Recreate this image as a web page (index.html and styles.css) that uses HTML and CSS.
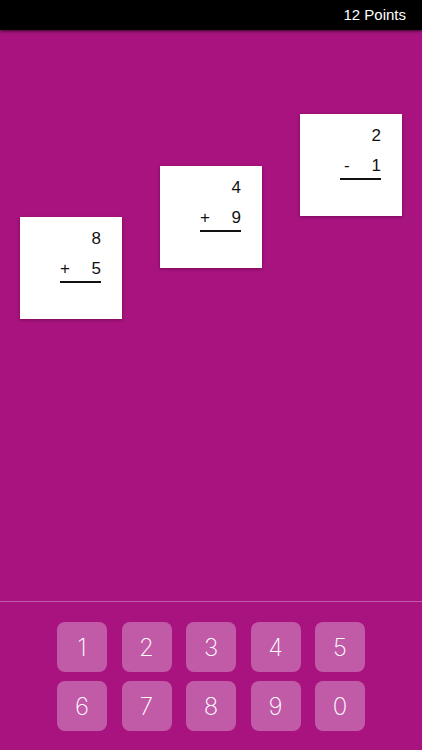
FILE: index.html
```html
<!DOCTYPE html>
<html lang="en">
<head>
<meta charset="utf-8">
<title>Math Drop</title>
<link rel="stylesheet" href="styles.css">
</head>
<body>
<div class="app">
  <header class="topbar"><span class="points">12 Points</span></header>
  <main class="board">
    <div class="card" style="left:20px;top:187px">
      <div class="problem">
        <div class="row top">8</div>
        <div class="row bottom"><span>+</span><span>5</span></div>
      </div>
    </div>
    <div class="card" style="left:160px;top:136px">
      <div class="problem">
        <div class="row top">4</div>
        <div class="row bottom"><span>+</span><span>9</span></div>
      </div>
    </div>
    <div class="card" style="left:300px;top:84px">
      <div class="problem">
        <div class="row top">2</div>
        <div class="row bottom"><span class="minus">-</span><span>1</span></div>
      </div>
    </div>
  </main>
  <footer class="keypad">
    <div class="keys">
      <button class="key">1</button>
      <button class="key">2</button>
      <button class="key">3</button>
      <button class="key">4</button>
      <button class="key">5</button>
      <button class="key">6</button>
      <button class="key">7</button>
      <button class="key">8</button>
      <button class="key">9</button>
      <button class="key">0</button>
    </div>
  </footer>
</div>
</body>
</html>
```
FILE: styles.css
```css
html, body {
  margin: 0;
  padding: 0;
}
body {
  width: 422px;
  height: 750px;
  overflow: hidden;
  background: #a8137f;
  font-family: "Liberation Sans", Arial, sans-serif;
}
.app {
  display: flex;
  flex-direction: column;
  height: 750px;
}
.topbar {
  height: 30px;
  background: #000;
  display: flex;
  justify-content: flex-end;
  align-items: center;
  padding-right: 16px;
  box-shadow: 0 1px 3px rgba(0, 0, 0, 0.7);
  position: relative;
  z-index: 2;
}
.points {
  color: #fff;
  font-size: 15px;
  line-height: 30px;
}
.board {
  height: 571px;
  position: relative;
  background: #a8137f;
}
.card {
  position: absolute;
  width: 102px;
  height: 102px;
  background: #fff;
  box-shadow: 0 1px 3px rgba(60, 0, 40, 0.45);
  box-sizing: border-box;
  padding: 9px 21px 0 0;
  display: flex;
  justify-content: flex-end;
  align-items: flex-start;
}
.problem {
  width: 41px;
  display: flex;
  flex-direction: column;
  gap: 5px;
  color: #111;
  font-size: 17px;
}
.row {
  line-height: 25px;
  height: 25px;
}
.row.top {
  text-align: right;
}
.row.bottom {
  display: flex;
  justify-content: space-between;
  border-bottom: 2px solid #111;
}
.minus {
  padding-left: 4px;
}
.keypad {
  flex: 1;
  border-top: 1px solid rgba(255, 255, 255, 0.3);
  box-shadow: 0 -1px 2px rgba(60, 0, 40, 0.25);
  background: #a8137f;
  padding-top: 20px;
}
.keys {
  display: grid;
  grid-template-columns: repeat(5, 50px);
  column-gap: 14.5px;
  row-gap: 9px;
  justify-content: center;
}
.key {
  width: 50px;
  height: 50px;
  border: none;
  border-radius: 8px;
  background: #c15ba8;
  color: #fff;
  font-family: "Inter", "Liberation Sans", sans-serif;
  font-weight: 200;
  font-size: 24px;
  padding: 0;
  display: flex;
  align-items: center;
  justify-content: center;
}
```
